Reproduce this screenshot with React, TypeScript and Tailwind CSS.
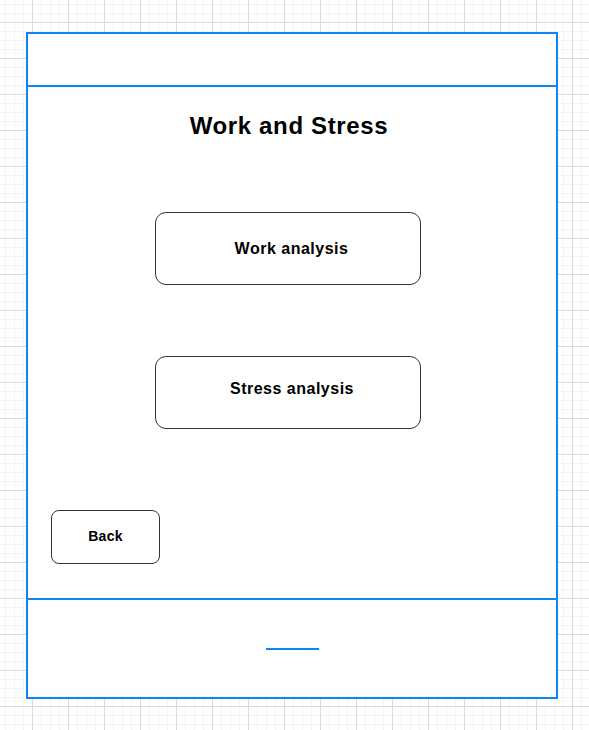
export default function App() {
  return (
    <div
      className="w-[589px] h-[730px] overflow-hidden bg-white pt-[32px] pl-[26px] bg-[linear-gradient(to_right,#dadada_1px,transparent_1px),linear-gradient(to_bottom,#dadada_1px,transparent_1px),linear-gradient(to_right,#f3f3f3_1px,transparent_1px),linear-gradient(to_bottom,#f3f3f3_1px,transparent_1px)] bg-[size:36px_36px,36px_36px,9px_9px,9px_9px] bg-[position:-4px_22px,-4px_22px,-4px_22px,-4px_22px]"
      style={{ fontFamily: '"Liberation Sans", Arial, sans-serif' }}
    >
      <div className="w-[532px] h-[667px] border-2 border-[#0d84fb] bg-white flex flex-col">
        <div className="h-[53px] border-b-2 border-[#0d84fb] shrink-0" />
        <div className="flex-1 flex flex-col border-b-2 border-[#0d84fb]">
          <div className="mt-[25px] h-[28px] leading-[28px] text-[24px] font-bold text-black text-center pr-[6px] tracking-[0.65px]">
            Work and Stress
          </div>
          <div className="mt-[72px] ml-[127px] w-[266px] h-[73px] rounded-[11px] border border-[#333333] flex items-center justify-center pl-[7px] text-[16px] font-bold text-black tracking-[0.5px]">
            Work analysis
          </div>
          <div className="mt-[71px] ml-[127px] w-[266px] h-[73px] rounded-[11px] border border-[#333333] flex items-center justify-center pl-[8px] pb-[8px] text-[16px] font-bold text-black tracking-[0.5px]">
            Stress analysis
          </div>
          <div className="mt-[81px] ml-[23px] w-[109px] h-[54px] rounded-[8px] border border-[#333333] flex items-center justify-center pb-[2px] text-[14px] font-bold text-black tracking-[0.3px]">
            Back
          </div>
        </div>
        <div className="h-[97px] shrink-0 pt-[48px] pl-[238px]">
          <div className="w-[53px] h-[2px] bg-[#0d84fb]" />
        </div>
      </div>
    </div>
  );
}
